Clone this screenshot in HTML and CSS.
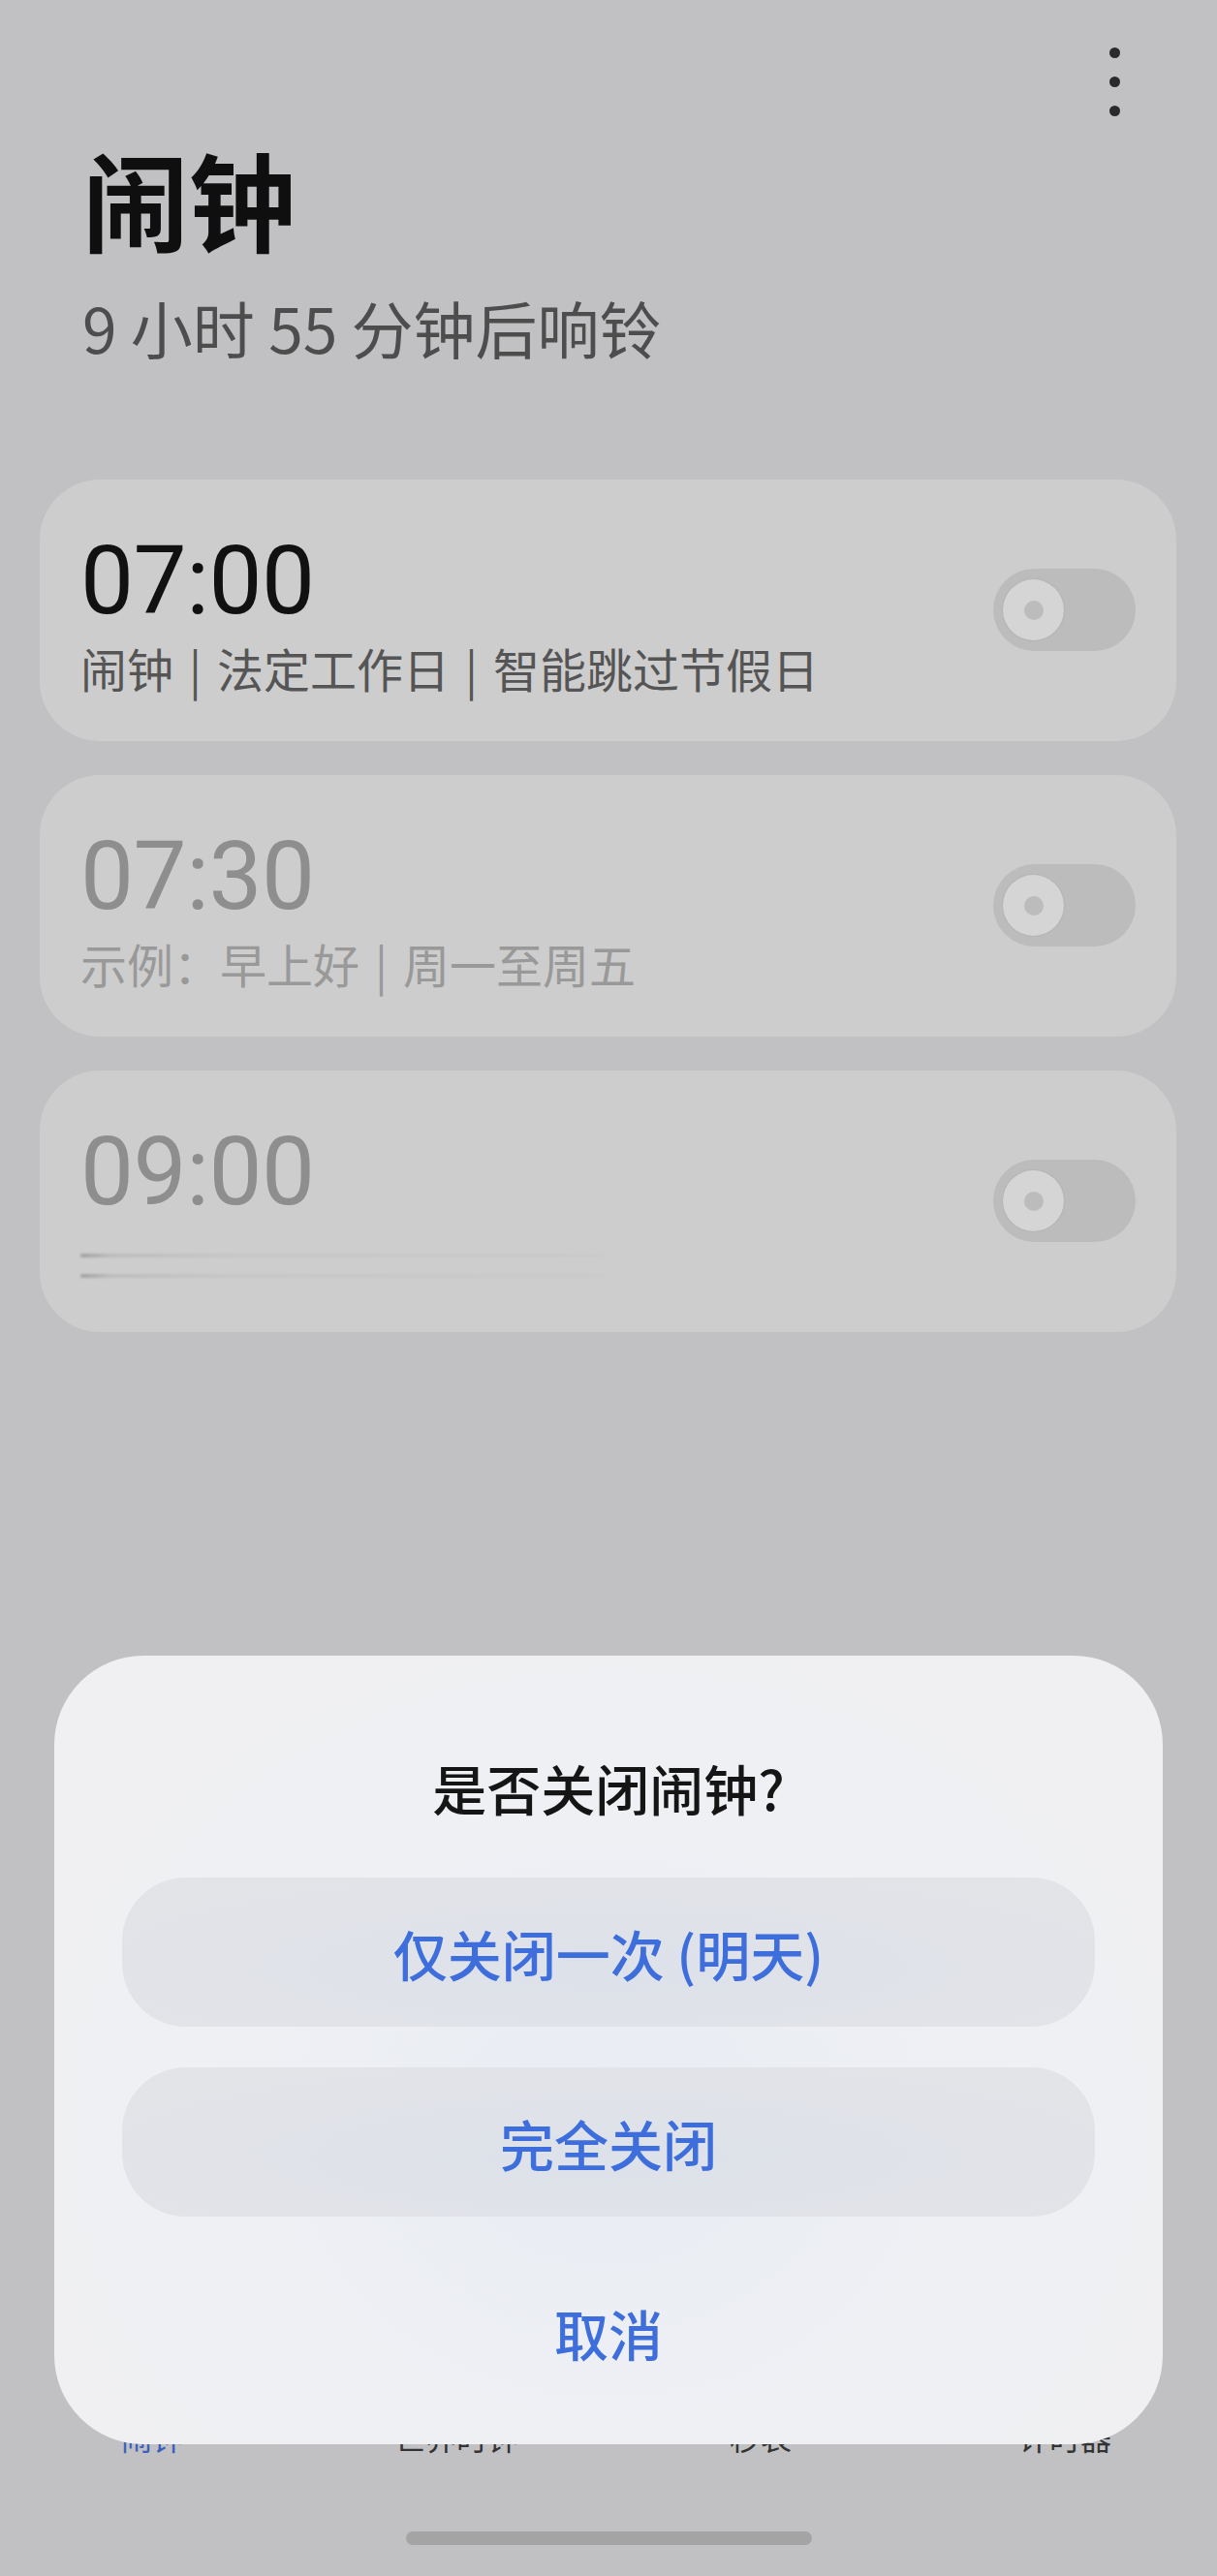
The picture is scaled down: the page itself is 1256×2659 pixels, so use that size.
FILE: index.html
```html
<!DOCTYPE html>
<html lang="zh-CN">
<head>
    <meta charset="UTF-8">
    <meta name="viewport" content="width=device-width, initial-scale=1.0">
    <title>闹钟</title>
    <link rel="stylesheet" href="styles.css">
</head>
<body>
    <div class="app">
        <div class="topbar">
            <div class="more">
                <span></span>
                <span></span>
                <span></span>
            </div>
        </div>

        <h1>闹钟</h1>
        <p class="next-ring">9 小时 55 分钟后响铃</p>

        <div class="alarm-list">
            <div class="alarm">
                <div class="alarm-info">
                    <div class="time">07:00</div>
                    <div class="desc">闹钟<span class="sep">|</span>法定工作日<span class="sep">|</span>智能跳过节假日</div>
                </div>
                <div class="switch"><span class="knob"></span></div>
            </div>
            <div class="alarm off">
                <div class="alarm-info">
                    <div class="time">07:30</div>
                    <div class="desc">示例：早上好<span class="sep">|</span>周一至周五</div>
                </div>
                <div class="switch"><span class="knob"></span></div>
            </div>
            <div class="alarm off">
                <div class="alarm-info">
                    <div class="time">09:00</div>
                    <div class="desc loading">
                        <span class="line"></span>
                        <span class="line"></span>
                    </div>
                </div>
                <div class="switch"><span class="knob"></span></div>
            </div>
        </div>

        <div class="tabbar">
            <div class="tab active">闹钟</div>
            <div class="tab">世界时钟</div>
            <div class="tab">秒表</div>
            <div class="tab">计时器</div>
        </div>
        <div class="home-area">
            <div class="home-bar"></div>
        </div>
    </div>

    <!-- диалог поверх экрана -->
    <div class="dialog">
        <div class="dialog-title">是否关闭闹钟?</div>
        <div class="dialog-actions">
            <button class="btn filled">仅关闭一次 (明天)</button>
            <button class="btn filled">完全关闭</button>
            <button class="btn">取消</button>
        </div>
    </div>
</body>
</html>
```

FILE: styles.css
```css
body {
    margin: 0;
    padding: 0;
    background-color: #c1c1c3;
    font-family: "Noto Sans CJK SC", "Noto Sans", sans-serif;
    color: #111;
}
.app {
    min-height: 100vh;
    display: flex;
    flex-direction: column;
}
.topbar {
    height: 138px;
    box-sizing: border-box;
    padding: 49px 100px 0 0;
    display: flex;
    justify-content: flex-end;
}
.more {
    display: flex;
    flex-direction: column;
    gap: 19px;
}
.more span {
    width: 11px;
    height: 11px;
    border-radius: 50%;
    background-color: #2a2a2a;
}
h1 {
    margin: 0;
    padding-left: 85px;
    font-size: 110px;
    line-height: 1.2;
    font-weight: 700;
    color: #0f0f0f;
}
.next-ring {
    margin: 29px 0 0;
    padding-left: 85px;
    font-size: 64px;
    line-height: 1.2;
    color: #4d4d4d;
}
.alarm-list {
    margin-top: 119px;
    padding: 0 42px 0 41px;
    display: flex;
    flex-direction: column;
    gap: 35px;
}
.alarm {
    height: 270px;
    box-sizing: border-box;
    padding: 0 42px;
    background-color: #cdcdcd;
    border-radius: 62px;
    display: flex;
    align-items: center;
    justify-content: space-between;
}
.time {
    font-family: Roboto, "Noto Sans", sans-serif;
    font-size: 98px;
    font-weight: 400;
    line-height: 1.2;
    letter-spacing: -0.5px;
    color: #111;
}
.desc {
    margin-top: 2px;
    height: 58px;
    font-size: 48px;
    line-height: 1.2;
    color: #555;
    white-space: nowrap;
}
.sep {
    margin: 0 16px;
}
.off .time {
    color: #8e8e8e;
}
.off .desc {
    color: #999;
}
.loading {
    display: flex;
    flex-direction: column;
    padding-top: 23px;
    box-sizing: border-box;
    gap: 17px;
}
.loading .line {
    width: 540px;
    height: 4px;
    border-radius: 2px;
    background: linear-gradient(90deg, #a2a2a2 0%, #bebebe 6%, #c7c7c7 30%, #cbcbcb 100%);
    filter: blur(0.8px);
}
.switch {
    width: 147px;
    height: 85px;
    box-sizing: border-box;
    padding-left: 10px;
    border-radius: 43px;
    background-color: #bcbcbc;
    display: flex;
    align-items: center;
}
.knob {
    width: 63px;
    height: 63px;
    border-radius: 50%;
    background-color: #d5d5d5;
    box-shadow: 0 0 2px rgba(0, 0, 0, 0.12);
    display: flex;
    align-items: center;
    justify-content: center;
}
.knob::after {
    content: "";
    width: 20px;
    height: 20px;
    border-radius: 50%;
    background-color: #bcbcbc;
}
.tabbar {
    margin-top: auto;
    display: grid;
    grid-template-columns: repeat(4, 1fr);
}
.tab {
    text-align: center;
    font-size: 32px;
    line-height: 1.2;
    color: #333;
}
.tab.active {
    color: #3a5fbf;
}
.home-area {
    padding: 79px 0 32px;
    display: flex;
    justify-content: center;
}
.home-bar {
    width: 419px;
    height: 14px;
    border-radius: 7px;
    background-color: #a4a4a4;
}
.dialog {
    position: fixed;
    left: 56px;
    right: 56px;
    bottom: 136px;
    padding: 102px 70px 39px;
    border-radius: 92px;
    background: radial-gradient(ellipse at 50% 60%, #e9ecf3 0%, #eef0f4 45%, #f0f0f2 80%);
}
.dialog-title {
    text-align: center;
    font-size: 56px;
    line-height: 1.2;
    font-weight: 500;
    color: #151515;
}
.dialog-actions {
    margin-top: 60px;
    display: flex;
    flex-direction: column;
    gap: 42px;
}
.btn {
    height: 154px;
    border: none;
    border-radius: 66px;
    background: transparent;
    font-family: "Noto Sans CJK SC", "Noto Sans", sans-serif;
    font-size: 56px;
    font-weight: 500;
    color: #3d6edb;
    padding: 0;
}
.btn.filled {
    background: radial-gradient(ellipse at 50% 60%, #dde1ea 0%, #e1e3e8 60%, #e3e4e7 100%);
}
```
